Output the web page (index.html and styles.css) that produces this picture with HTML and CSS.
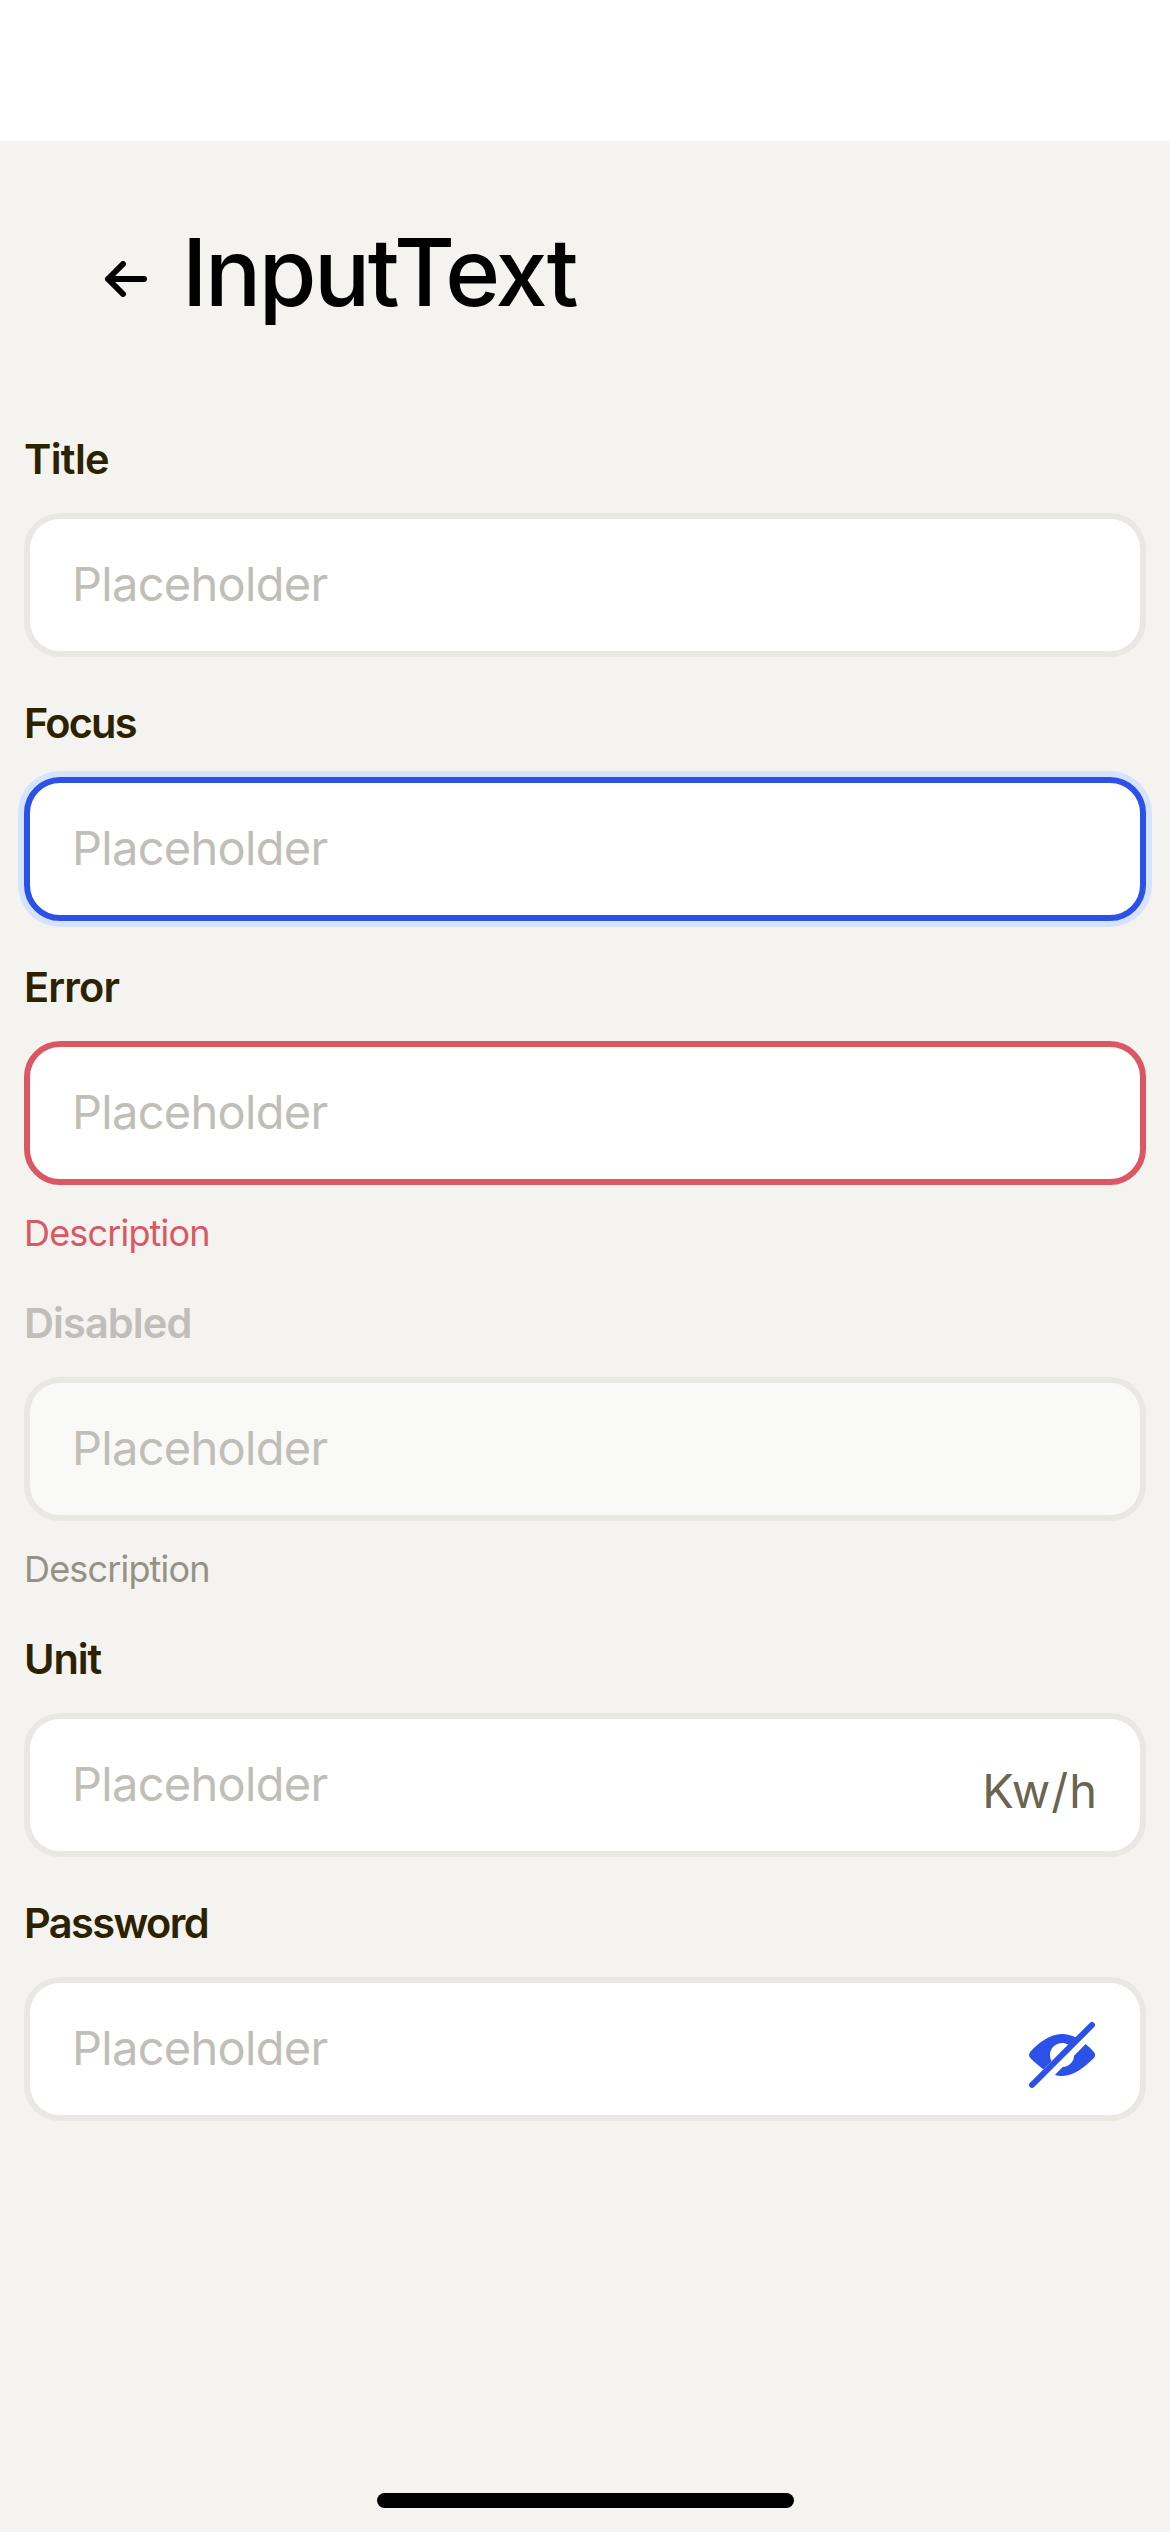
FILE: index.html
```html
<!DOCTYPE html>
<html lang="en">
<head>
<meta charset="utf-8">
<title>InputText</title>
<link rel="stylesheet" href="styles.css">
</head>
<body>
<div class="screen">
  <div class="status-bar"></div>
  <header class="header">
    <svg class="back" viewBox="0 0 48 36" fill="none" stroke="#000" stroke-width="6" stroke-linecap="round" stroke-linejoin="round"><path d="M42 18H6M21 3L6 18l15 15"/></svg>
    <h1 class="heading">InputText</h1>
  </header>
  <main class="form">
    <div class="field field--title">
      <div class="label">Title</div>
      <div class="box"><span class="placeholder">Placeholder</span></div>
    </div>
    <div class="field field--focus">
      <div class="label">Focus</div>
      <div class="box"><span class="placeholder">Placeholder</span></div>
    </div>
    <div class="field field--error">
      <div class="label">Error</div>
      <div class="box"><span class="placeholder">Placeholder</span></div>
      <div class="description">Description</div>
    </div>
    <div class="field field--disabled">
      <div class="label">Disabled</div>
      <div class="box"><span class="placeholder">Placeholder</span></div>
      <div class="description">Description</div>
    </div>
    <div class="field field--unit">
      <div class="label">Unit</div>
      <div class="box"><span class="placeholder">Placeholder</span><span class="unit">Kw/h</span></div>
    </div>
    <div class="field field--password">
      <div class="label">Password</div>
      <div class="box">
        <span class="placeholder">Placeholder</span>
        <svg class="eye" viewBox="78 177 216 216" fill="#2c51e8">
          <path fill-rule="evenodd" d="M130 328C117 318 104 307 91 294Q83 285 91 275C117 248 150 222 185 222C201 222 215 226 228 233L155 304C152 299 150 292 150 285A36 36 0 0 1 186 249C193 249 199 251 205 254L155 304Z"/>
          <path d="M257 252C266 259 274 267 281 275Q290 285 281 295C254 322 221 348 186 348C179 348 172 347 165 344L188 321A35 35 0 0 0 222 287Z"/>
          <path d="M96 375L276 195" stroke="#2c51e8" stroke-width="18" stroke-linecap="round"/>
        </svg>
      </div>
    </div>
  </main>
  <div class="home-indicator"></div>
</div>
</body>
</html>
```
FILE: styles.css
```css
* { box-sizing: border-box; }
body { margin: 0; font-family: Inter, "Liberation Sans", sans-serif; }

.screen {
  display: flex;
  flex-direction: column;
  width: 1170px;
  height: 2532px;
  background: #f4f3ef;
}
.status-bar { height: 141px; background: #fff; }

.header {
  display: flex;
  align-items: center;
  gap: 32px;
  height: 288px;
  padding: 0 102px 26px;
}
.back { width: 48px; height: 36px; margin-top: 14px; }
.heading {
  margin: 0;
  font-size: 93.5px;
  line-height: 120px;
  font-weight: 500;
  letter-spacing: -2.5px;
  color: #000;
}

.form {
  flex: 1;
  display: flex;
  flex-direction: column;
  gap: 36px;
  padding: 0 24px;
}
.label {
  margin-bottom: 24px;
  font-size: 41.5px;
  line-height: 60px;
  font-weight: 600;
  color: #2b2200;
}
.box {
  display: flex;
  align-items: center;
  justify-content: space-between;
  height: 144px;
  padding: 0 42px;
  border: 6px solid #e9e8e3;
  border-radius: 36px;
  background: #fff;
}
.placeholder {
  padding-bottom: 2px;
  font-size: 47px;
  line-height: 60px;
  letter-spacing: -0.72px;
  color: #bfbeb8;
}
.description {
  margin-top: 24px;
  font-size: 36px;
  line-height: 48px;
  letter-spacing: -0.83px;
  color: #949286;
}
.unit {
  margin-top: 12px;
  font-size: 47px;
  line-height: 60px;
  letter-spacing: 1px;
  color: #6a654f;
}
.eye { width: 72px; height: 72px; margin-top: 12px; }

.field--title .label { letter-spacing: -0.7px; }
.field--focus .label { letter-spacing: -1.8px; }
.field--focus .box { border-color: #2c51e8; box-shadow: 0 0 0 6px #d6e3fc; }
.field--error .label { letter-spacing: -0.85px; }
.field--error .box { border-color: #da5763; }
.field--error .description { color: #da5763; }
.field--disabled .label { letter-spacing: -0.9px; color: #bfbeb8; }
.field--disabled .box { background: #f9f9f7; }
.field--unit .label { letter-spacing: -1.1px; }
.field--password .label { letter-spacing: -1.6px; }

.home-indicator {
  align-self: center;
  width: 417px;
  height: 15px;
  margin-bottom: 24px;
  border-radius: 8px;
  background: #000;
}
```
